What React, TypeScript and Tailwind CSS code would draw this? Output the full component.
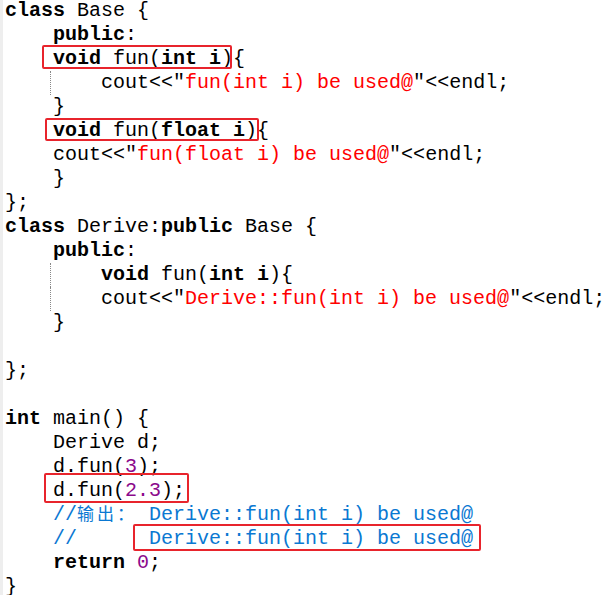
import type { ReactNode } from 'react'

const K = ({ children }: { children: ReactNode }) => <span className="font-bold">{children}</span>
const S = ({ children }: { children: ReactNode }) => <span className="text-[#ff0000]">{children}</span>
const N = ({ children }: { children: ReactNode }) => <span className="text-[#8b0a8b]">{children}</span>
const C = ({ children }: { children: ReactNode }) => <span className="text-[#0a78d2]">{children}</span>

function Line({ children, guide }: { children?: ReactNode; guide?: boolean }) {
  return (
    <div className="relative h-[24px] whitespace-pre leading-[24px]">
      {guide && <span className="absolute left-[45px] top-0 h-[24px] border-l border-dotted border-[#888]" />}
      {children}
    </div>
  )
}

export default function App() {
  return (
    <div
      className="relative h-[595px] w-[612px] overflow-hidden bg-white text-[20px] text-black"
      style={{ fontFamily: '"Liberation Mono", "Noto Sans CJK SC", monospace' }}
    >
      <div className="absolute left-0 top-0 h-full w-[3px] bg-[#eeeeee]" />
      <div className="mt-[-1px] pl-[5px]">
        <Line><K>class</K> Base {'{'}</Line>
        <Line>    <K>public</K>:</Line>
        <Line>    <K>void</K> fun(<K>int i</K>){'{'}</Line>
        <Line guide>        cout{'<<'}"<S>fun(int i) be used@</S>"{'<<'}endl;</Line>
        <Line>    {'}'}</Line>
        <Line>    <K>void</K> fun(<K>float i</K>){'{'}</Line>
        <Line>    cout{'<<'}"<S>fun(float i) be used@</S>"{'<<'}endl;</Line>
        <Line>    {'}'}</Line>
        <Line>{'};'}</Line>
        <Line><K>class</K> Derive:<K>public</K> Base {'{'}</Line>
        <Line>    <K>public</K>:</Line>
        <Line guide>        <K>void</K> fun(<K>int i</K>){'{'}</Line>
        <Line guide>        cout{'<<'}"<S>Derive::fun(int i) be used@</S>"{'<<'}endl;</Line>
        <Line>    {'}'}</Line>
        <Line />
        <Line>{'};'}</Line>
        <Line />
        <Line><K>int</K> main() {'{'}</Line>
        <Line>    Derive d;</Line>
        <Line>    d.fun(<N>3</N>);</Line>
        <Line>    d.fun(<N>2.3</N>);</Line>
        <Line>
          {'    '}
          <C>
            //<span className="inline-block w-[60px] text-[17px] tracking-[3px]">输出：</span> Derive::fun(int i) be used@
          </C>
        </Line>
        <Line>    <C>//      Derive::fun(int i) be used@</C></Line>
        <Line>    <K>return</K> <N>0</N>;</Line>
        <Line>{'}'}</Line>
      </div>

      {/* red annotation boxes */}
      <div className="absolute left-[42px] top-[45px] h-[24px] w-[190px] rounded-[2px] border-2 border-[#e8242c]" />
      <div className="absolute left-[45px] top-[118px] h-[23px] w-[214px] rounded-[2px] border-2 border-[#e8242c]" />
      <div className="absolute left-[44px] top-[473px] h-[30px] w-[145px] rounded-[2px] border-2 border-[#e8242c]" />
      <div className="absolute left-[133px] top-[524px] h-[27px] w-[348px] rounded-[2px] border-2 border-[#e8242c]" />
    </div>
  )
}
